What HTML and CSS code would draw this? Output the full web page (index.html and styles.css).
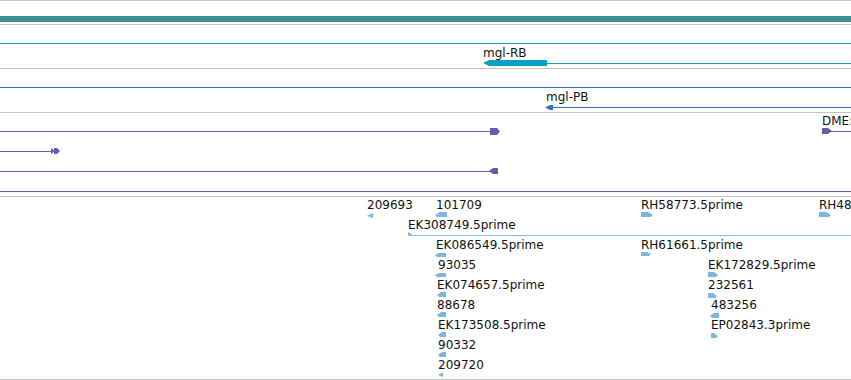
FILE: index.html
```html
<!DOCTYPE html>
<html>
<head>
<meta charset="utf-8">
<link rel="stylesheet" href="styles.css">
</head>
<body>
<div class="view">
  <div class="ruler"><div class="scalebar"></div></div>

  <div class="track t-gene">
    <div class="line teal" style="left:0;top:18px;width:851px"></div>
    <span class="label" style="left:483px;top:22px">mgl-RB</span>
    <svg class="glyph" style="left:483px;top:35px" width="64" height="6" viewBox="0 0 64 6"><polygon points="0,3 6,0 64,0 64,6 6,6" fill="#0ba2c2"/></svg>
    <div class="line teal" style="left:547px;top:38px;width:304px"></div>
  </div>

  <div class="track t-gene">
    <div class="line blue" style="left:0;top:18px;width:851px"></div>
    <span class="label" style="left:546px;top:22px">mgl-PB</span>
    <svg class="glyph" style="left:545px;top:36px" width="8" height="5" viewBox="0 0 8 5"><polygon points="0,2.5 5,0 8,0 8,5 5,5" fill="#3a6cc0"/></svg>
    <div class="line blue" style="left:551px;top:38px;width:300px"></div>
  </div>

  <div class="track t-purple">
    <div class="line purple" style="left:0;top:18px;width:492px"></div>
    <svg class="glyph" style="left:490px;top:15px" width="10" height="7" viewBox="0 0 10 7"><polygon points="0,0 7,0 10,3.5 7,7 0,7" fill="#6b5ba8"/></svg>
    <span class="label" style="left:822px;top:2px">DME:</span>
    <svg class="glyph" style="left:822px;top:15px" width="10" height="6" viewBox="0 0 10 6"><polygon points="0,0 6,0 10,3 6,6 0,6" fill="#6b5ba8"/></svg>
    <div class="line purple" style="left:830px;top:18px;width:21px"></div>

    <div class="line purple" style="left:0;top:38px;width:54px"></div>
    <svg class="glyph" style="left:51px;top:35px" width="9" height="6" viewBox="0 0 9 6"><polygon points="0,0 4,3 0,6" fill="#6b5ba8"/><polygon points="3,0 6,0 9,3 6,6 3,6" fill="#6b5ba8"/></svg>

    <div class="line purple" style="left:0;top:58px;width:492px"></div>
    <svg class="glyph" style="left:489px;top:55px" width="9" height="6" viewBox="0 0 9 6"><polygon points="0,3 4,0 9,0 9,6 4,6" fill="#6b5ba8"/></svg>

    <div class="line purple" style="left:0;top:78px;width:851px"></div>
  </div>

  <div class="track t-est">
    <span class="label" style="left:367px;top:2px">209693</span>
    <svg class="glyph" style="left:367px;top:16px" width="6" height="5" viewBox="0 0 6 5"><polygon points="0,3 6,0 6,5" fill="#7db6de"/></svg>
    <span class="label" style="left:436px;top:2px">101709</span>
    <svg class="glyph" style="left:435px;top:15px" width="12" height="5" viewBox="0 0 12 5"><polygon points="0,3 5,0 12,0 12,5 2,5" fill="#7db6de"/></svg>
    <span class="label" style="left:641px;top:2px">RH58773.5prime</span>
    <svg class="glyph" style="left:641px;top:15px" width="12" height="5" viewBox="0 0 12 5"><polygon points="0,0 7,0 12,3 10,5 0,5" fill="#7db6de"/></svg>
    <span class="label" style="left:819px;top:2px">RH48</span>
    <svg class="glyph" style="left:819px;top:15px" width="12" height="5" viewBox="0 0 12 5"><polygon points="0,0 7,0 12,3 10,5 0,5" fill="#7db6de"/></svg>

    <span class="label" style="left:408px;top:22px">EK308749.5prime</span>
    <svg class="glyph" style="left:408px;top:35px" width="5" height="4" viewBox="0 0 5 4"><polygon points="0,0 5,3 0,4" fill="#7db6de"/></svg>
    <div class="line est" style="left:410px;top:38px;width:441px"></div>

    <span class="label" style="left:436px;top:42px">EK086549.5prime</span>
    <svg class="glyph" style="left:435px;top:56px" width="11" height="4" viewBox="0 0 11 4"><polygon points="0,2 4,0 11,0 11,4 2,4" fill="#7db6de"/></svg>
    <span class="label" style="left:641px;top:42px">RH61661.5prime</span>
    <svg class="glyph" style="left:641px;top:55px" width="10" height="4" viewBox="0 0 10 4"><polygon points="0,0 6,0 10,2 8,4 0,4" fill="#7db6de"/></svg>

    <span class="label" style="left:438px;top:62px">93035</span>
    <svg class="glyph" style="left:435px;top:76px" width="11" height="4" viewBox="0 0 11 4"><polygon points="0,2 4,0 11,0 11,4 2,4" fill="#7db6de"/></svg>
    <span class="label" style="left:708px;top:62px">EK172829.5prime</span>
    <svg class="glyph" style="left:708px;top:75px" width="10" height="5" viewBox="0 0 10 5"><polygon points="0,0 6,0 10,3 8,5 0,5" fill="#7db6de"/></svg>

    <span class="label" style="left:437px;top:82px">EK074657.5prime</span>
    <svg class="glyph" style="left:437px;top:95px" width="9" height="5" viewBox="0 0 9 5"><polygon points="0,3 4,0 9,0 9,5 2,5" fill="#7db6de"/></svg>
    <span class="label" style="left:708px;top:82px">232561</span>
    <svg class="glyph" style="left:708px;top:96px" width="9" height="5" viewBox="0 0 9 5"><polygon points="0,0 5,0 9,3 7,5 0,5" fill="#7db6de"/></svg>

    <span class="label" style="left:437px;top:102px">88678</span>
    <svg class="glyph" style="left:437px;top:115px" width="9" height="5" viewBox="0 0 9 5"><polygon points="0,3 4,0 9,0 9,5 2,5" fill="#7db6de"/></svg>
    <span class="label" style="left:711px;top:102px">483256</span>
    <svg class="glyph" style="left:710px;top:116px" width="9" height="5" viewBox="0 0 9 5"><polygon points="0,3 4,0 9,0 9,5 2,5" fill="#7db6de"/></svg>

    <span class="label" style="left:438px;top:122px">EK173508.5prime</span>
    <svg class="glyph" style="left:438px;top:135px" width="8" height="5" viewBox="0 0 8 5"><polygon points="0,3 4,0 8,0 8,5 2,5" fill="#7db6de"/></svg>
    <span class="label" style="left:711px;top:122px">EP02843.3prime</span>
    <svg class="glyph" style="left:711px;top:136px" width="7" height="5" viewBox="0 0 7 5"><polygon points="0,0 3,0 7,3 5,5 0,5" fill="#7db6de"/></svg>

    <span class="label" style="left:438px;top:142px">90332</span>
    <svg class="glyph" style="left:438px;top:155px" width="8" height="5" viewBox="0 0 8 5"><polygon points="0,3 4,0 8,0 8,5 2,5" fill="#7db6de"/></svg>

    <span class="label" style="left:438px;top:162px">209720</span>
    <svg class="glyph" style="left:438px;top:175px" width="5" height="5" viewBox="0 0 5 5"><polygon points="0,3 5,0 5,5" fill="#7db6de"/></svg>
  </div>
</div>
</body>
</html>
```
FILE: styles.css
```css
html, body {
  margin: 0;
  padding: 0;
  background: #ffffff;
}
body {
  width: 851px;
  height: 380px;
  overflow: hidden;
  font-family: "DejaVu Sans", "Liberation Sans", sans-serif;
  font-size: 12px;
  color: #111111;
}
.view {
  display: flex;
  flex-direction: column;
  width: 851px;
}
.ruler {
  border-top: 1px solid #c3c3c3;
  border-bottom: 1px solid #c3c3c3;
  padding: 15px 0 2px 0;
}
.scalebar {
  height: 6px;
  background: #408e90;
}
.track {
  position: relative;
  overflow: hidden;
  border-bottom: 1px solid #c3c3c3;
}
.t-gene { height: 43px; }
.t-purple { height: 83px; }
.t-est { height: 182px; }
.line {
  position: absolute;
  height: 1px;
}
.line.teal { background: #1c9db6; }
.line.blue { background: #3a6cc0; }
.line.purple { background: #6b5ba8; }
.line.est { background: #8fbbe0; }
.label {
  position: absolute;
  line-height: 12px;
  white-space: nowrap;
}
.glyph {
  position: absolute;
  display: block;
}
```
